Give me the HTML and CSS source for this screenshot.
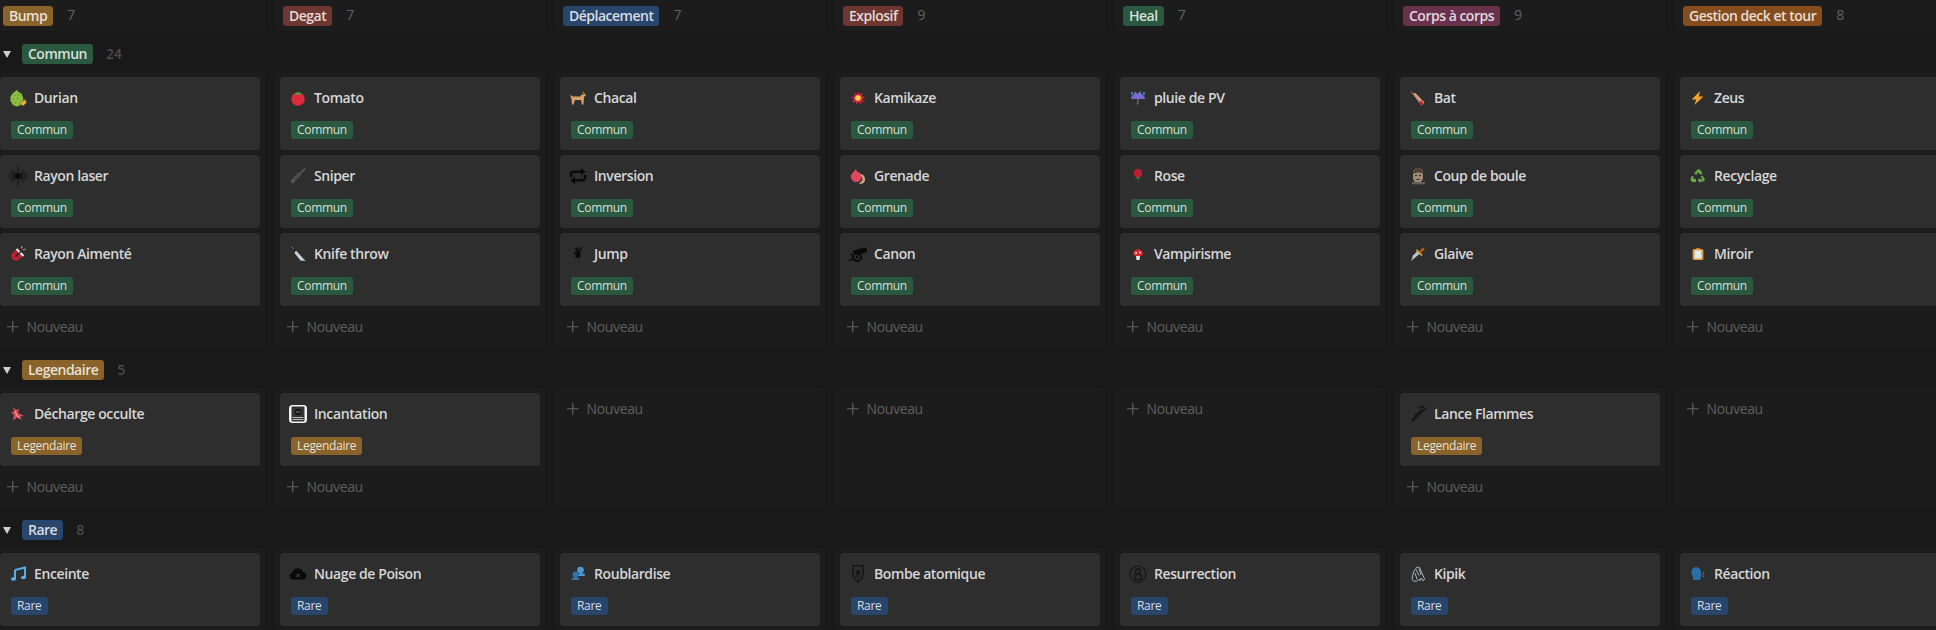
FILE: index.html
```html
<!DOCTYPE html>
<html lang="fr">
<head>
<meta charset="utf-8">
<title>Cartes</title>
<link rel="stylesheet" href="styles.css">
</head>
<body>
<main class="board">
  <div class="row head-row">
    <div class="head-cell"><span class="tag tag-l yellow">Bump</span><span class="count">7</span></div>
    <div class="head-cell"><span class="tag tag-l red">Degat</span><span class="count">7</span></div>
    <div class="head-cell"><span class="tag tag-l blue">Déplacement</span><span class="count">7</span></div>
    <div class="head-cell"><span class="tag tag-l red">Explosif</span><span class="count">9</span></div>
    <div class="head-cell"><span class="tag tag-l green">Heal</span><span class="count">7</span></div>
    <div class="head-cell"><span class="tag tag-l pink">Corps à corps</span><span class="count">9</span></div>
    <div class="head-cell"><span class="tag tag-l orange">Gestion deck et tour</span><span class="count">8</span></div>
  </div>

  <div class="group-head"><span class="caret"></span><span class="tag tag-l green">Commun</span><span class="group-count">24</span></div>
  <div class="row">
    <div class="cell">
      <article class="card"><div class="title"><svg class="ico" viewBox="0 0 18 18"><path d="M8 1l1.500 2 3 1.500 1.500 4 .5 4-2.500 3.500-4 1.500-4-1.500L1.500 12 1.500 7.500 4 4z" fill="#8dbf3f"/><path d="M5 6l1 1M9 5l1 1M4 10l1 1M8 9l1 1M6 13l1 1" stroke="#5d8f26" stroke-width="1.200"/><path d="M10 15l6-4.500 1.500 3-3 3z" fill="#e2b13c" stroke="#8a7a3a" stroke-width=".8"/></svg><span>Durian</span></div><span class="tag green">Commun</span></article>
      <article class="card"><div class="title"><svg class="ico" viewBox="0 0 18 18"><path d="M9-1v20M-1 9h20M3 3l12 12M15 3L3 15M1 5.500l16 7M1 12.500l16-7" stroke="#0c0c0c" stroke-width=".9"/><circle cx="9" cy="9" r="2.800" fill="#0c0c0c"/></svg><span>Rayon laser</span></div><span class="tag green">Commun</span></article>
      <article class="card"><div class="title"><svg class="ico" viewBox="0 0 18 18"><path d="M8.500 5.500L5 9a2.800 2.800 0 0 0 4 4l3.500-3.500" fill="none" stroke="#c01f35" stroke-width="3.600"/><path d="M7.500 4l3 3M11.500 8l3 3" stroke="#f0f0f0" stroke-width="2"/><path d="M13 1l-.5 2.500M16.500 4L14 5" stroke="#e8c14a" stroke-width="1"/></svg><span>Rayon Aimenté</span></div><span class="tag green">Commun</span></article>
      <div class="add"><svg class="plus" viewBox="0 0 12 12"><path d="M6 0v12M0 6h12"/></svg><span>Nouveau</span></div>
    </div>
    <div class="cell">
      <article class="card"><div class="title"><svg class="ico" viewBox="0 0 18 18"><circle cx="9" cy="10" r="6.800" fill="#dc2a3f"/><path d="M5.500 4.500L9 3l3.500 1.500L10.500 6H7.500z" fill="#4a9a3a"/></svg><span>Tomato</span></div><span class="tag green">Commun</span></article>
      <article class="card"><div class="title"><svg class="ico" viewBox="0 0 18 18"><path d="M2.500 15.500L11 6.500" stroke="#565656" stroke-width="3.400"/><path d="M11 6.500l5-5" stroke="#666" stroke-width="1.100"/><path d="M4 10l3 4M8 7.500l-1.500 7M11 8l-4-2" stroke="#444" stroke-width="1.200"/></svg><span>Sniper</span></div><span class="tag green">Commun</span></article>
      <article class="card"><div class="title"><svg class="ico" viewBox="0 0 18 18"><path d="M3.500 2.500l3.500 4" stroke="#222" stroke-width="1.600"/><path d="M3.500 2.500l.8 1" stroke="#ddd" stroke-width="1"/><path d="M7 5.500l9.500 10.500-5-.5L5.500 8z" fill="#c5d3de"/></svg><span>Knife throw</span></div><span class="tag green">Commun</span></article>
      <div class="add"><svg class="plus" viewBox="0 0 12 12"><path d="M6 0v12M0 6h12"/></svg><span>Nouveau</span></div>
    </div>
    <div class="cell">
      <article class="card"><div class="title"><svg class="ico" viewBox="0 0 18 18"><path d="M1 6l3 1.500h7.500L13.500 4l.5-2 1 2 2 2-2 2-.5 7.500h-1.500l-1-4.500H6L4.500 15.500H3L2.500 10z" fill="#d9a268"/><path d="M12.500 6l1.500-4 .8 3.500z" fill="#5c3a1e"/><path d="M15 2l1-1.500V4z" fill="#3a2a1a"/></svg><span>Chacal</span></div><span class="tag green">Commun</span></article>
      <article class="card"><div class="title"><svg class="ico" viewBox="0 0 18 18"><path d="M2 10V7.500a2.800 2.800 0 0 1 2.800-2.800H13M16 8v2.500a2.800 2.800 0 0 1-2.800 2.800H5" fill="none" stroke="#0a0a0a" stroke-width="2.400"/><path d="M12 .7l4.500 4-4.500 4zM6 9.300l-4.500 4 4.500 4z" fill="#0a0a0a"/></svg><span>Inversion</span></div><span class="tag green">Commun</span></article>
      <article class="card"><div class="title"><svg class="ico" viewBox="0 0 18 18"><path d="M12 .7l.5 4-1 1.300v6.500l-5 .5V9L4.500 8l4-2.500 2 .5z" fill="#0a0a0a"/><circle cx="8" cy="4" r="1.700" fill="#0a0a0a"/><path d="M9 13v3.500" stroke="#222" stroke-width=".8"/></svg><span>Jump</span></div><span class="tag green">Commun</span></article>
      <div class="add"><svg class="plus" viewBox="0 0 12 12"><path d="M6 0v12M0 6h12"/></svg><span>Nouveau</span></div>
    </div>
    <div class="cell">
      <article class="card"><div class="title"><svg class="ico" viewBox="0 0 18 18"><path d="M9 2.500l1.300 3 3.400-2-1.200 3.700L16 8l-3 2.300 3 2.500-3.800-.5.400 3.200-3-2.400-2.500 2.700V12.800l-3.700.4L5 10.300 2.300 8l3.700-.4L4.800 3.800l3.200 2z" fill="#d8263a"/><circle cx="9" cy="9" r="2.800" fill="#f6d04e"/></svg><span>Kamikaze</span></div><span class="tag green">Commun</span></article>
      <article class="card"><div class="title"><svg class="ico" viewBox="0 0 18 18"><path d="M7 2l1 2.500A5.300 5.300 0 1 1 3 6.500z" fill="#e0485f"/><path d="M11.500 7c4 .5 6 5 3.500 8.500-1 1.500-4 1.500-5.500 1 2-1 3-2 3-4.500" fill="#c9a58a"/><path d="M12 9c1.500 1 2 3 1 5l-3 1.500c2-1 2.500-3 2-6.500z" fill="#7c2230"/></svg><span>Grenade</span></div><span class="tag green">Commun</span></article>
      <article class="card"><div class="title"><svg class="ico" viewBox="0 0 18 18"><path d="M3 6L15 2.500l3 .5v4l-9 3.500z" fill="#0a0a0a"/><circle cx="8" cy="12" r="4" fill="none" stroke="#0a0a0a" stroke-width="2"/><circle cx="8" cy="12" r="1.400" fill="#0a0a0a"/><path d="M0 15l3-.5M1 9l2 1" stroke="#0a0a0a" stroke-width="1.500"/></svg><span>Canon</span></div><span class="tag green">Commun</span></article>
      <div class="add"><svg class="plus" viewBox="0 0 12 12"><path d="M6 0v12M0 6h12"/></svg><span>Nouveau</span></div>
    </div>
    <div class="cell">
      <article class="card"><div class="title"><svg class="ico" viewBox="0 0 18 18"><path d="M2 10a7 6 0 0 1 14 0z" fill="#7b68d8"/><path d="M6 3v2M11 2.500v3M15 3v3M3 3v3" stroke="#58a7e0" stroke-width="1.200"/><path d="M9 10v4q0 1-1.500 1" fill="none" stroke="#7b7b8a" stroke-width="1.100"/></svg><span>pluie de PV</span></div><span class="tag green">Commun</span></article>
      <article class="card"><div class="title"><svg class="ico" viewBox="0 0 18 18"><path d="M9 2c3 0 4.200 2 4.200 4.500S11.500 10.500 9 10.500 4.800 9 4.800 6.500 6 2 9 2z" fill="#bd1e2e"/><path d="M6.500 10L9 12.500 11.500 10z" fill="#3f7a35"/><path d="M9 12v3" stroke="#2a5a2a" stroke-width="1"/></svg><span>Rose</span></div><span class="tag green">Commun</span></article>
      <article class="card"><div class="title"><svg class="ico" viewBox="0 0 18 18"><path d="M4 8.800a5 4.500 0 0 1 10 0c0 1.400-1.500 2.200-2.500 2.200h-5C5.500 11 4 10.200 4 8.800z" fill="#d8262f"/><circle cx="7" cy="8" r="1.100" fill="#f3e9e0"/><circle cx="11" cy="7.500" r="1" fill="#f3e9e0"/><path d="M7 11h4l-.5 4h-3z" fill="#f1e6dc"/></svg><span>Vampirisme</span></div><span class="tag green">Commun</span></article>
      <div class="add"><svg class="plus" viewBox="0 0 12 12"><path d="M6 0v12M0 6h12"/></svg><span>Nouveau</span></div>
    </div>
    <div class="cell">
      <article class="card"><div class="title"><svg class="ico" viewBox="0 0 18 18"><path d="M2 2l1.500 3" stroke="#b5593c" stroke-width="1"/><path d="M3.500 4.500L6.500 4l9 9.500-3 3z" fill="#d89a7e"/><path d="M9.500 14l2.500 2.500 2.500-2-2.500-3z" fill="#b82626"/></svg><span>Bat</span></div><span class="tag green">Commun</span></article>
      <article class="card"><div class="title"><svg class="ico" viewBox="0 0 18 18"><path d="M4 6c0-3.500 2-4.700 5-4.700S14 2.500 14 6v6l-2 3H6l-2-3z" fill="#9c8c76"/><path d="M4 7c0-4 2-5.700 5-5.700S14 3 14 7c-2-2-7-2-10 0z" fill="#4d4236"/><path d="M6 8.500h2M10 8.500h2M7.500 12.500h3" stroke="#332a22" stroke-width="1"/><path d="M3 15h13v2.300H3z" fill="#66605a"/></svg><span>Coup de boule</span></div><span class="tag green">Commun</span></article>
      <article class="card"><div class="title"><svg class="ico" viewBox="0 0 18 18"><path d="M11 8.500L2 16l2-5.500L8.500 6z" fill="#b7c7d6"/><path d="M7.500 5L13 10.500" stroke="#e59a33" stroke-width="1.800"/><path d="M11 7l4-3.700" stroke="#b8651f" stroke-width="2.200"/></svg><span>Glaive</span></div><span class="tag green">Commun</span></article>
      <div class="add"><svg class="plus" viewBox="0 0 12 12"><path d="M6 0v12M0 6h12"/></svg><span>Nouveau</span></div>
    </div>
    <div class="cell">
      <article class="card"><div class="title"><svg class="ico" viewBox="0 0 18 18"><path d="M11 2L2.700 10.500h4.500L5.500 16l8.900-8.500H9.800z" fill="#f4a531"/></svg><span>Zeus</span></div><span class="tag green">Commun</span></article>
      <article class="card"><div class="title"><svg class="ico" viewBox="0 0 18 18"><path d="M9 2l2.500 1 2 3.500-2.200 1.300L9 5 7.500 8 5 6.500zM13.500 8.500l2.500 4-1.500 2h-3v1.500L8.500 13.300l3-2.300v1.500h2L11.800 9.500zM2.200 9.500L5 9 4 11.500l3 .5V15H3l-1.500-2z" fill="#6aa844"/></svg><span>Recyclage</span></div><span class="tag green">Commun</span></article>
      <article class="card"><div class="title"><svg class="ico" viewBox="0 0 18 18"><rect x="3.600" y="4" width="10.800" height="11" rx="1.500" fill="#e39a3b"/><rect x="5.600" y="5.500" width="6.800" height="8" fill="#d8eef8"/><path d="M7 4h4V3H7z" fill="#c77c2b"/></svg><span>Miroir</span></div><span class="tag green">Commun</span></article>
      <div class="add"><svg class="plus" viewBox="0 0 12 12"><path d="M6 0v12M0 6h12"/></svg><span>Nouveau</span></div>
    </div>
  </div>

  <div class="group-head"><span class="caret"></span><span class="tag tag-l yellow">Legendaire</span><span class="group-count">5</span></div>
  <div class="row">
    <div class="cell">
      <article class="card"><div class="title"><svg class="ico" viewBox="0 0 18 18"><path d="M4 1.700l3 3.300 3-1-1 4 6 3-4 .5 2 3.500-5-2.500-4 3 1-6-3-2 3-1z" fill="#d9505c"/><path d="M6 6l2 5 3 2" stroke="#f5b5b5" fill="none" stroke-width=".8"/></svg><span>Décharge occulte</span></div><span class="tag yellow">Legendaire</span></article>
      <div class="add"><svg class="plus" viewBox="0 0 12 12"><path d="M6 0v12M0 6h12"/></svg><span>Nouveau</span></div>
    </div>
    <div class="cell">
      <article class="card"><div class="title"><svg class="ico" viewBox="0 0 18 18"><rect width="18" height="18" rx="3.500" fill="#f2f2f2"/><rect x="2.500" y="1.500" width="13" height="15" rx="1" fill="#333"/><circle cx="9" cy="7" r="3" fill="#111"/><path d="M7 6.500l4 1M7 7.500l4-1" stroke="#777" stroke-width=".7"/><path d="M3.500 12.500h11M3.500 14.500h11" stroke="#bbb" stroke-width="1"/></svg><span>Incantation</span></div><span class="tag yellow">Legendaire</span></article>
      <div class="add"><svg class="plus" viewBox="0 0 12 12"><path d="M6 0v12M0 6h12"/></svg><span>Nouveau</span></div>
    </div>
    <div class="cell"><div class="add"><svg class="plus" viewBox="0 0 12 12"><path d="M6 0v12M0 6h12"/></svg><span>Nouveau</span></div></div>
    <div class="cell"><div class="add"><svg class="plus" viewBox="0 0 12 12"><path d="M6 0v12M0 6h12"/></svg><span>Nouveau</span></div></div>
    <div class="cell"><div class="add"><svg class="plus" viewBox="0 0 12 12"><path d="M6 0v12M0 6h12"/></svg><span>Nouveau</span></div></div>
    <div class="cell">
      <article class="card"><div class="title"><svg class="ico" viewBox="0 0 18 18"><path d="M3 16L13 5" stroke="#161616" stroke-width="2.800"/><path d="M10 3l4-1.500 2 2.500-3 3M6 9l1 4" stroke="#161616" stroke-width="1.500" fill="none"/></svg><span>Lance Flammes</span></div><span class="tag yellow">Legendaire</span></article>
      <div class="add"><svg class="plus" viewBox="0 0 12 12"><path d="M6 0v12M0 6h12"/></svg><span>Nouveau</span></div>
    </div>
    <div class="cell"><div class="add"><svg class="plus" viewBox="0 0 12 12"><path d="M6 0v12M0 6h12"/></svg><span>Nouveau</span></div></div>
  </div>

  <div class="group-head"><span class="caret"></span><span class="tag tag-l blue">Rare</span><span class="group-count">8</span></div>
  <div class="row">
    <div class="cell"><article class="card"><div class="title"><svg class="ico" viewBox="0 0 18 18"><path d="M6 5l10-2.500V12" fill="none" stroke="#5aaee8" stroke-width="2"/><path d="M6 5v9" stroke="#5aaee8" stroke-width="2"/><ellipse cx="4.500" cy="14" rx="2.700" ry="1.800" fill="#5aaee8"/><ellipse cx="14.500" cy="12.500" rx="2.700" ry="1.800" fill="#5aaee8"/></svg><span>Enceinte</span></div><span class="tag blue">Rare</span></article></div>
    <div class="cell"><article class="card"><div class="title"><svg class="ico" viewBox="0 0 18 18"><path d="M4 14.500a3.600 3.600 0 0 1-.5-7.100A5.500 5.500 0 0 1 14 6.800a3.900 3.900 0 0 1 0 7.700z" fill="#0a0a0a"/><path d="M7.500 9l3 3M10.500 9l-3 3" stroke="#555" stroke-width="1"/></svg><span>Nuage de Poison</span></div><span class="tag blue">Rare</span></article></div>
    <div class="cell"><article class="card"><div class="title"><svg class="ico" viewBox="0 0 18 18"><circle cx="11.500" cy="5" r="3.300" fill="#4a9ad6"/><path d="M8 10c1-2 6-2.500 7.800-1v2H8z" fill="#4a9ad6"/><circle cx="6.500" cy="9.500" r="3" fill="#2f74ad"/><path d="M2.500 15c0-2 2-3 4-3s4 1 4 3z" fill="#2f74ad"/></svg><span>Roublardise</span></div><span class="tag blue">Rare</span></article></div>
    <div class="cell"><article class="card"><div class="title"><svg class="ico" viewBox="0 0 18 18"><path d="M4 .7h10v2.300l.5 3-1.500 7-4 4-4-4-1.500-7 .5-3z" fill="none" stroke="#161616" stroke-width="1.500"/><circle cx="9" cy="7" r="2.200" fill="#161616"/><path d="M9 9v5M6.500 11h5" stroke="#161616" stroke-width="1"/></svg><span>Bombe atomique</span></div><span class="tag blue">Rare</span></article></div>
    <div class="cell"><article class="card"><div class="title"><svg class="ico" viewBox="0 0 18 18"><circle cx="9" cy="9" r="8" fill="none" stroke="#161616" stroke-width="1.100"/><circle cx="9" cy="6.500" r="2.500" fill="none" stroke="#161616" stroke-width="1.300"/><rect x="5.500" y="9.500" width="7" height="5" rx="2.500" fill="none" stroke="#161616" stroke-width="1.300"/></svg><span>Resurrection</span></div><span class="tag blue">Rare</span></article></div>
    <div class="cell"><article class="card"><div class="title"><svg class="ico" viewBox="0 0 18 18"><path d="M8 2l2.500.5L13 8l2.500 6-1.500 2-2-3-1 2.500-2-1-1.500 2L4.500 16l-1.500-2 1-5 1-3zM7 4.500l3 6M10 3.500l2 6.500M6 8l2 6" fill="none" stroke="#a9b2ba" stroke-width="1"/></svg><span>Kipik</span></div><span class="tag blue">Rare</span></article></div>
    <div class="cell"><article class="card"><div class="title"><svg class="ico" viewBox="0 0 18 18"><path d="M2.400 7c0-3 2.600-4.700 4.800-4.700S12 4 12 7v1.500l1 1.500-1 1v2c0 1-1 2-2 2H4v-3C3 11 2.400 9 2.400 7z" fill="#2a6ea8"/><path d="M14.500 7.500v1.500M14.500 10.500V12" stroke="#e0653a" stroke-width="1.200"/></svg><span>Réaction</span></div><span class="tag blue">Rare</span></article></div>
  </div>
</main>
</body>
</html>
```
FILE: styles.css
```css
* { box-sizing: border-box; }
html, body { margin: 0; height: 100%; }
body {
  background: #191919;
  color: rgba(255, 255, 255, 0.81);
  font-family: "Open Sans", "Noto Sans", sans-serif;
  overflow: hidden;
}
.board { width: 1945px; margin-left: -5px; height: 630px; overflow: hidden; }
.row { display: grid; grid-template-columns: repeat(7, 270px); column-gap: 10px; }
.head-row { height: 31px; }
.head-cell {
  display: flex;
  align-items: flex-start;
  padding: 6px 0 0 8px;
  background: #1c1c1c;
  border-radius: 0 0 4px 4px;
}
.tag {
  display: inline-flex;
  align-items: center;
  height: 18px;
  padding: 0 6px 1px;
  border-radius: 3px;
  font-size: 12px;
  letter-spacing: -0.3px;
  white-space: nowrap;
  color: rgba(255, 255, 255, 0.82);
}
.tag-l { height: 20px; padding-bottom: 2px; font-size: 14px; font-weight: 600; letter-spacing: -0.5px; }
.green { background: #2b593f; }
.yellow { background: #89632a; }
.blue { background: #28456c; }
.red { background: #6e3630; }
.pink { background: #69314c; }
.orange { background: #854c1d; }
.count { margin-left: 14px; font-size: 14px; line-height: 18px; color: rgba(255, 255, 255, 0.33); letter-spacing: -0.3px; }
.group-head { display: flex; align-items: center; height: 41px; padding: 13px 0 8px 8px; }
.caret {
  width: 0;
  height: 0;
  margin: 0 11px 0 0;
  border-left: 4px solid transparent;
  border-right: 4px solid transparent;
  border-top: 7px solid #cfcfcf;
}
.group-count { margin-left: 13px; padding-bottom: 2px; font-size: 14px; font-weight: 600; color: rgba(255, 255, 255, 0.22); letter-spacing: -0.3px; }
.cell {
  display: flex;
  flex-direction: column;
  gap: 5px;
  padding: 5px 5px 4px;
  background: #1c1c1c;
  border-radius: 4px;
}
.card {
  display: flex;
  flex-direction: column;
  align-items: flex-start;
  height: 73px;
  padding: 11px 11px 0;
  background: #2e2e2e;
  border-radius: 4px;
}
.title {
  display: flex;
  align-items: center;
  gap: 7px;
  height: 20px;
  margin: 0 0 13px -2px;
  font-size: 14px;
  font-weight: 600;
  letter-spacing: -0.4px;
  white-space: nowrap;
  color: rgba(255, 255, 255, 0.81);
}
.title span, .add span { margin-top: -2px; }
.ico { width: 18px; height: 18px; flex: none; overflow: visible; }
.add {
  display: flex;
  align-items: center;
  gap: 8px;
  height: 32px;
  padding-left: 7px;
  font-size: 14px;
  letter-spacing: -0.35px;
  color: rgba(255, 255, 255, 0.3);
}
.plus { width: 11.500px; height: 11.500px; fill: none; stroke: rgba(255, 255, 255, 0.3); stroke-width: 1.300; }
```
